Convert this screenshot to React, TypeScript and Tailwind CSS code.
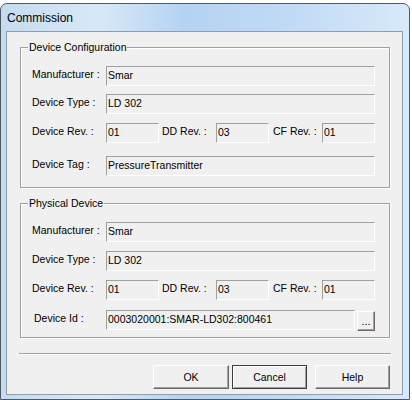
import React from "react";

const field =
  "h-[20px] bg-[#f0f0f0] border border-t-[#a0a0a0] border-l-[#a0a0a0] border-r-white border-b-white pl-[1px] pb-[1px] flex items-center whitespace-nowrap leading-none";

const button3d =
  "bg-[#f0f0f0] border border-t-white border-l-white border-r-[#696969] border-b-[#696969] shadow-[inset_-1px_-1px_0_#a0a0a0] flex items-center justify-center leading-none";

function Group({ title, height, top, children }: { title: string; height: string; top: string; children: React.ReactNode }) {
  return (
    <div
      className={`relative ${height} ${top} ml-[13px] w-[370px] border border-[#a0a0a0] shadow-[inset_1px_1px_0_#fff,1px_1px_0_#fff] flex flex-col pl-[11px]`}
    >
      <span className="absolute left-[7px] -top-[8px] px-[1px] bg-[#f0f0f0] leading-[14px]">{title}</span>
      {children}
    </div>
  );
}

function Row({ label, value, className = "" }: { label: string; value: string; className?: string }) {
  return (
    <div className={`flex items-center ${className}`}>
      <span className="w-[74px] pb-[2px]">{label}</span>
      <div className={`${field} w-[269px]`}>{value}</div>
    </div>
  );
}

function RevRow({ dev, dd, cf, className = "" }: { dev: string; dd: string; cf: string; className?: string }) {
  return (
    <div className={`flex items-center ${className}`}>
      <span className="w-[74px] pb-[2px]">Device Rev. :</span>
      <div className={`${field} w-[53px]`}>{dev}</div>
      <span className="ml-[3px] w-[54px] pb-[2px]">DD Rev. :</span>
      <div className={`${field} w-[53px]`}>{dd}</div>
      <span className="ml-[4px] w-[49px] pb-[2px]">CF Rev. :</span>
      <div className={`${field} w-[53px]`}>{cf}</div>
    </div>
  );
}

export default function App() {
  return (
    <div className="w-[412px] h-[400px] bg-white overflow-hidden font-['Liberation_Sans',Arial,sans-serif] text-[10.5px] text-black">
      <div className="mt-[3px] w-[410px] h-[397px] rounded-t-[7px] border border-[#4e5966] bg-[linear-gradient(90deg,#c6dbf0_0%,#d9e8f7_24%,#b4d3f2_45%,#c0daf5_70%,#d8e9fa_100%)] flex flex-col">
        {/* title bar */}
        <div className="h-[27px] flex items-center pl-[6px] text-[12px]">Commission</div>

        {/* client area */}
        <div className="ml-[5px] mr-[6px] mb-[4px] flex-1 border border-[#8e9caf] bg-[#f0f0f0] flex flex-col">
          <Group title="Device Configuration" height="h-[141px]" top="mt-[15px]">
            <Row label="Manufacturer :" value="Smar" className="mt-[18px]" />
            <Row label="Device Type :" value="LD 302" className="mt-[8px]" />
            <RevRow dev="01" dd="03" cf="01" className="mt-[9px]" />
            <Row label="Device Tag :" value="PressureTransmitter" className="mt-[13px]" />
          </Group>

          <Group title="Physical Device" height="h-[135px]" top="mt-[15px]">
            <Row label="Manufacturer :" value="Smar" className="mt-[18px]" />
            <Row label="Device Type :" value="LD 302" className="mt-[9px]" />
            <RevRow dev="01" dd="03" cf="01" className="mt-[9px]" />
            <div className="flex items-center mt-[9px]">
              <span className="w-[74px] pl-[2px] pb-[2px]">Device Id :</span>
              <div className={`${field} w-[249px]`}>0003020001:SMAR-LD302:800461</div>
              <button className={`${button3d} ml-[2px] mt-[2px] w-[18px] h-[20px] items-end pb-[4px]`}>...</button>
            </div>
          </Group>

          {/* separator */}
          <div className="mt-[15px] ml-[12px] w-[372px] h-[2px] border-t border-t-[#a0a0a0] border-b border-b-white" />

          {/* buttons */}
          <div className="mt-[10px] flex justify-end pr-[12px]">
            <button className={`${button3d} w-[76px] h-[24px]`}>OK</button>
            <button className="ml-[3px] w-[75px] h-[24px] border border-[#3c3c3c] bg-[#f0f0f0] shadow-[inset_1px_1px_0_#fff,inset_-1px_-1px_0_#a0a0a0] flex items-center justify-center leading-none">
              Cancel
            </button>
            <button className={`${button3d} ml-[8px] w-[75px] h-[24px]`}>Help</button>
          </div>
        </div>
      </div>
    </div>
  );
}
